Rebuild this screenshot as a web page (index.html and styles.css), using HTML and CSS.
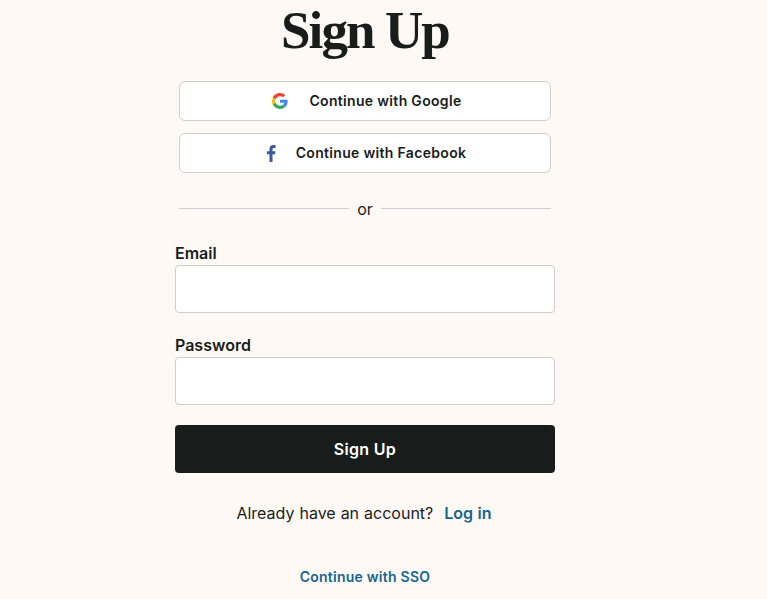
FILE: index.html
```html
<!DOCTYPE html>
<html lang="en">
<head>
    <meta charset="UTF-8">
    <meta name="viewport" content="width=device-width, initial-scale=1.0">
    <title>Sign Up</title>
    <link rel="stylesheet" href="styles.css">
</head>
<body>
    <div class="container">
        <h1>Sign Up</h1>

        <div class="social">
            <button class="social-btn google-btn" type="button">
                <svg viewBox="0 0 48 48" width="16" height="16" aria-hidden="true">
                    <path fill="#EA4335" d="M24 9.5c3.54 0 6.71 1.22 9.21 3.6l6.85-6.85C35.9 2.38 30.47 0 24 0 14.62 0 6.51 5.38 2.56 13.22l7.98 6.19C12.43 13.72 17.74 9.5 24 9.5z"/>
                    <path fill="#4285F4" d="M46.98 24.55c0-1.57-.15-3.09-.38-4.55H24v9.02h12.94c-.58 2.96-2.26 5.48-4.78 7.18l7.73 6c4.51-4.18 7.09-10.36 7.09-17.65z"/>
                    <path fill="#FBBC05" d="M10.53 28.59c-.48-1.45-.76-2.99-.76-4.59s.27-3.14.76-4.59l-7.98-6.19C.92 16.46 0 20.12 0 24c0 3.88.92 7.54 2.56 10.78l7.97-6.19z"/>
                    <path fill="#34A853" d="M24 48c6.48 0 11.93-2.13 15.89-5.81l-7.73-6c-2.15 1.45-4.92 2.3-8.16 2.3-6.26 0-11.57-4.22-13.47-9.91l-7.98 6.19C6.51 42.62 14.62 48 24 48z"/>
                </svg>
                <span>Continue with Google</span>
            </button>
            <button class="social-btn facebook-btn" type="button">
                <svg viewBox="0 0 10 18" width="10" height="17" aria-hidden="true">
                    <path fill="#3b5998" d="M6.6 18V9.8h2.7l.4-3.2H6.6V4.600c0-.9.3-1.500 1.600-1.500h1.600V.2C9.500.1 8.600 0 7.500 0 5.100 0 3.400 1.500 3.400 4.200v2.400H.7v3.200h2.700V18z"/>
                </svg>
                <span>Continue with Facebook</span>
            </button>
        </div>

        <div class="divider"><span>or</span></div>

        <form class="signup-form">
            <label for="email">Email</label>
            <input type="email" id="email">

            <label for="password">Password</label>
            <input type="password" id="password">

            <button class="submit-btn" type="submit">Sign Up</button>
        </form>

        <p class="login-line">Already have an account? <a href="#">Log in</a></p>
        <p class="sso-line"><a href="#">Continue with SSO</a></p>
    </div>
</body>
</html>
```

FILE: styles.css
```css
* {
    margin: 0;
    padding: 0;
    box-sizing: border-box;
}

html, body {
    height: 599px;
    overflow: hidden;
}

body {
    background-color: #fff9f6;
    color: #181d1b;
    font-family: 'Inter', sans-serif;
}

.container {
    width: 380px;
    margin-left: 175px;
    display: flex;
    flex-direction: column;
}

h1 {
    font-family: 'Liberation Serif', serif;
    font-size: 53px;
    font-weight: 700;
    line-height: 60px;
    letter-spacing: -1.9px;
    text-align: center;
    color: #181d1b;
    margin-bottom: 21px;
}

.social {
    display: flex;
    flex-direction: column;
    gap: 12px;
    padding: 0 4px;
}

.social-btn {
    height: 40px;
    padding-bottom: 2px;
    display: flex;
    align-items: center;
    justify-content: center;
    gap: 21px;
    background-color: white;
    border: 1px solid #d0cdcc;
    border-radius: 6px;
    color: #181d1b;
    font-family: inherit;
    font-size: 14px;
    font-weight: 600;
    letter-spacing: 0.32px;
}

.social-btn svg {
    margin-top: 2px;
}

.google-btn {
    padding-left: 4px;
}

.facebook-btn {
    padding-left: 2px;
    gap: 20px;
}

.divider {
    display: flex;
    align-items: center;
    gap: 8px;
    margin: 26px 4px 0;
    height: 20px;
    font-size: 16px;
    line-height: 20px;
}

.divider::before,
.divider::after {
    content: "";
    flex: 1;
    height: 1px;
    margin-bottom: 2px;
    background-color: #d0cdcc;
}

.signup-form {
    display: flex;
    flex-direction: column;
    margin-top: 22px;
}

label {
    font-size: 16px;
    font-weight: 600;
    line-height: 24px;
}

input {
    height: 48px;
    background-color: white;
    border: 1px solid #d0cdcc;
    border-radius: 4px;
    margin-bottom: 20px;
}

.submit-btn {
    height: 48px;
    background-color: #181d1b;
    color: white;
    border: none;
    border-radius: 4px;
    font-family: inherit;
    font-size: 16px;
    font-weight: 600;
    letter-spacing: 0.3px;
}

.login-line {
    margin-top: 28px;
    font-size: 16px;
    line-height: 24px;
    text-align: center;
    word-spacing: 0.5px;
}

.login-line a {
    margin-left: 6px;
    margin-right: 2px;
    color: #13668f;
    font-weight: 600;
    text-decoration: none;
}

.sso-line {
    margin-top: 42px;
    font-size: 14px;
    line-height: 20px;
    text-align: center;
}

.sso-line a {
    color: #13668f;
    font-weight: 600;
    letter-spacing: 0.25px;
    text-decoration: none;
}
```
